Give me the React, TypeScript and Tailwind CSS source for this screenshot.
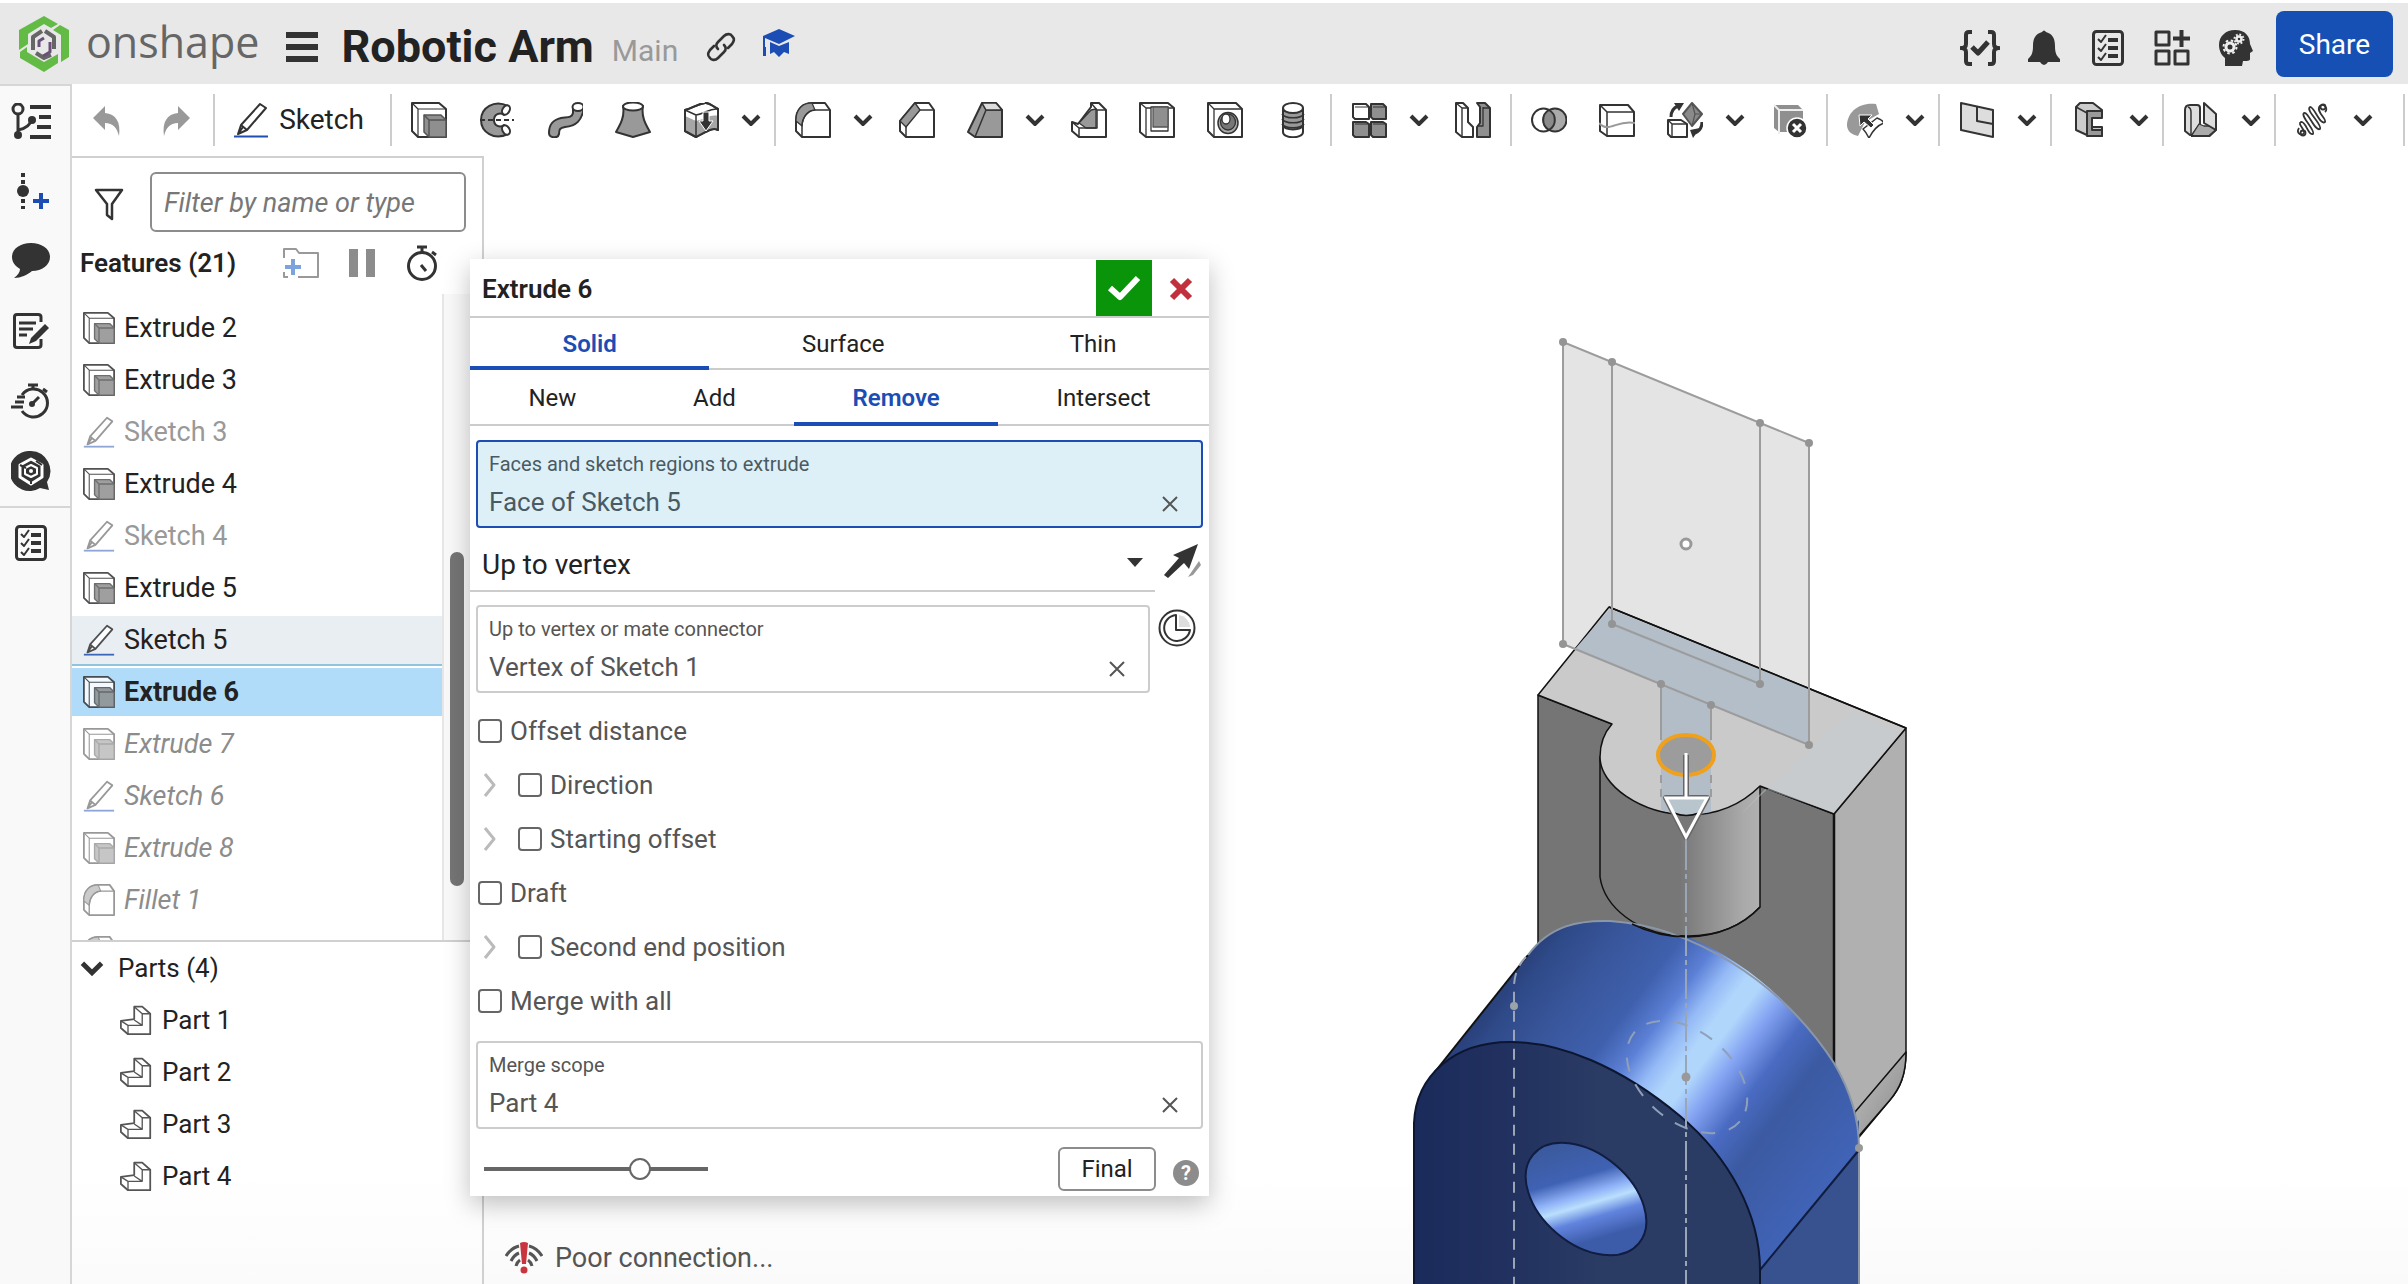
import type { ReactNode } from "react";
import clsx from "clsx";

type IconProps = { className?: string };

function Icon({
  children,
  className = "size-9",
  box = "0 0 36 36",
}: IconProps & { children: ReactNode; box?: string }) {
  return (
    <svg
      viewBox={box}
      className={clsx("shrink-0", className)}
      fill="none"
      stroke="#333"
      strokeWidth="2"
      strokeLinejoin="round"
      aria-hidden="true"
    >
      {children}
    </svg>
  );
}

/* ---------- toolbar icons ---------- */

const UndoIcon = () => (
  <Icon>
    <path d="M4 16L16 4V11C27 12 32 20 30 34C28 26 24 21 16 21V28Z" fill="#999" stroke="none" />
  </Icon>
);

const RedoIcon = () => (
  <Icon>
    <path d="M32 16L20 4V11C9 12 4 20 6 34C8 26 12 21 20 21V28Z" fill="#999" stroke="none" />
  </Icon>
);

const PencilIcon = ({ className }: IconProps) => (
  <Icon className={className}>
    <path d="M27 2L33 6L14 28L5 32L8 23ZM8 23L14 28M10 25L5 32" fill="#fff" />
    <path d="M1 34.500H35" stroke="#1f4fb0" />
  </Icon>
);

const ExtrudeIcon = ({ className }: IconProps) => (
  <Icon className={className}>
    <path d="M1 1H28L35 7V35H7L1 29Z" fill="#fff" />
    <path d="M1 1L7 7H35M7 7V35" strokeWidth="1.200" />
    <path d="M13 13H30L35 18V35H18L13 30Z" fill="#8f8f8f" stroke="#555" strokeWidth="1.500" />
    <path d="M13 13L18 18H35M18 18V35" stroke="#555" strokeWidth="1.500" />
  </Icon>
);

const RevolveIcon = () => (
  <Icon>
    <path
      d="M29 4C15-3 2 6 2 18C2 30 15 39 29 32C31 30 31 27 28 25L25 23C21 26 15 24 15 18C15 12 21 10 25 13L28 11C31 9 31 6 29 4Z"
      fill="#999"
    />
    <ellipse cx="27" cy="8" rx="3.500" ry="5" transform="rotate(30 27 8)" fill="#fff" />
    <ellipse cx="27" cy="28" rx="3.500" ry="5" transform="rotate(-30 27 28)" fill="#fff" />
    <path d="M1 18H35" strokeDasharray="5 3" />
  </Icon>
);

const SweepIcon = () => (
  <Icon>
    <path
      d="M26 5V11C25 16 20 15 14 16C6 18 2 22 2 31C2 36 11 37 12 32C12 27 13 26 18 25C29 24 35 19 37 5"
      fill="#999"
    />
    <ellipse cx="31" cy="5" rx="5.500" ry="4" fill="#fff" />
  </Icon>
);

const LoftIcon = () => (
  <Icon>
    <path d="M8 4C10 15 5 23 1 30L18 35L35 30C31 23 26 15 28 4Z" fill="#999" />
    <ellipse cx="18" cy="4.500" rx="10" ry="4" fill="#fff" />
  </Icon>
);

const ThickenIcon = () => (
  <Icon>
    <path d="M2 8C10 6 14 2 22 1C26 0 29 4 35 7V28C29 25 23 30 13 35L2 29Z" fill="#fff" />
    <path d="M2 14L13 19C22 17 28 12 35 14V28C29 25 23 30 13 35L2 29Z" fill="#a6a6a6" stroke="none" />
    <path d="M2 8C10 6 14 2 22 1C26 0 29 4 35 7V28C29 25 23 30 13 35L2 29Z" />
    <path d="M2 8L13 13C22 12 26 6 35 7M13 13V35" strokeWidth="1.500" />
    <path d="M20 10H26V19H30L23 29L16 19H20Z" fill="#333" stroke="#fff" strokeWidth="1" />
  </Icon>
);

const FilletIcon = ({ className }: IconProps) => (
  <Icon className={className}>
    <path d="M1 18C1 7 8 1 17 1H30L35 8V35H7L1 29Z" fill="#fff" />
    <path d="M1 18C1 7 8 1 17 1L20 8C13 8 8 14 7 24L1 19Z" fill="#999" strokeWidth="1.200" />
    <path d="M35 8H20C12 9 7 16 7 24V35" strokeWidth="1.500" />
  </Icon>
);

const ChamferIcon = () => (
  <Icon>
    <path d="M1 19L16 1H30L35 8V35H7L1 29Z" fill="#fff" />
    <path d="M1 19L16 1L21 8L7 25Z" fill="#999" strokeWidth="1.300" />
    <path d="M35 8H21M7 25V35" strokeWidth="1.500" />
  </Icon>
);

const DraftIcon = () => (
  <Icon>
    <path d="M15 1H29L35 8V35H8L1 30Z" fill="#999" />
    <path d="M15 1L19 8H35M19 8L8 35" strokeWidth="1.500" />
    <path d="M15 1H29L35 8H19Z" fill="#ddd" strokeWidth="1.500" />
  </Icon>
);

const RibIcon = () => (
  <Icon>
    <path d="M1 20L7 22L20 5V1H28L35 8V35H8L1 29Z" fill="#fff" />
    <path d="M8 21L20 8L25 7V26H15Z" fill="#999" strokeWidth="1.300" />
    <path d="M20 1L26 8H35M26 8V26H8V35M1 20L8 26" strokeWidth="1.500" />
  </Icon>
);

const ShellIcon = () => (
  <Icon>
    <path d="M1 1H29L35 6V35H7L1 30Z" fill="#fff" />
    <path d="M1 1L7 6H35M7 6V35" strokeWidth="1.300" />
    <path d="M12 5H29V29H12Z" fill="#fff" strokeWidth="1.300" />
    <path d="M14 5H29V25H14Z" fill="#8f8f8f" stroke="#555" strokeWidth="1.300" />
  </Icon>
);

const HoleIcon = () => (
  <Icon>
    <path d="M1 1H29L35 7V35H7L1 29Z" fill="#fff" />
    <path d="M1 1L7 7H35M7 7V35" strokeWidth="1.300" />
    <ellipse cx="21" cy="21" rx="10" ry="10.500" fill="#aaa" strokeWidth="1.500" />
    <ellipse cx="21" cy="20" rx="7.500" ry="8" fill="#777" strokeWidth="1.300" />
    <ellipse cx="19" cy="17" rx="4" ry="5" fill="#fff" strokeWidth="1.300" />
  </Icon>
);

const ThreadIcon = () => (
  <Icon>
    <path d="M8 6V30C8 37 28 37 28 30V6" fill="#fff" />
    <path d="M8 9V23C10 29 26 29 28 23V9Z" fill="#999" />
    <path d="M7 12C10 17 26 17 29 12M7 17C10 22 26 22 29 17M7 22C10 27 26 27 29 22" strokeWidth="1.600" />
    <ellipse cx="18" cy="6" rx="10" ry="5" fill="#fff" />
  </Icon>
);

const PatternIcon = () => (
  <Icon>
    <path d="M2 2H15L18 5V17H4L2 15Z" fill="#fff" />
    <path d="M20 2H32L35 5V17H22L20 15Z" fill="#8f8f8f" />
    <path d="M2 20H15L18 22V35H4L2 33Z" fill="#8f8f8f" />
    <path d="M20 20H32L35 22V35H22L20 33Z" fill="#8f8f8f" />
    <path d="M4 5H18M22 5H35M4 22H18M22 22H35" strokeWidth="1" />
  </Icon>
);

const MirrorIcon = () => (
  <Icon>
    <path d="M1 1H8L13 6V20L18 25V35H7L1 30Z" fill="#fff" />
    <path d="M1 1L7 6H13M7 6V35" strokeWidth="1.400" />
    <path d="M22 1H30L35 6V35H22V25L25 21V5Z" fill="#8f8f8f" />
    <path d="M28 5V24H22M35 6H28" strokeWidth="1.300" />
  </Icon>
);

const BooleanIcon = () => (
  <Icon>
    <circle cx="12.500" cy="18" r="11.500" fill="#fff" />
    <circle cx="24" cy="18" r="11.500" fill="#aaa" />
    <path d="M18 8A11.500 11.500 0 0 1 18 28A11.500 11.500 0 0 1 18 8Z" fill="#8a8a8a" />
  </Icon>
);

const SplitIcon = () => (
  <Icon>
    <path d="M1 3H29L35 10V34H8L1 29Z" fill="#fff" />
    <path d="M1 3L8 10H35M8 10V34" strokeWidth="1.500" />
    <path d="M0 21C10 32 18 17 36 21" stroke="#999" />
  </Icon>
);

const TransformIcon = () => (
  <Icon>
    <path d="M25 1L35 12L25 24L16 12Z" fill="#8a8a8a" stroke="#555" />
    <path d="M25 1L28 12L25 24M28 12H35" stroke="#555" strokeWidth="1.200" />
    <path d="M1 18H14L20 22V35H4L1 32Z" fill="#fff" />
    <path d="M1 18L5 22H20M5 22V35" strokeWidth="1.400" />
    <path d="M4 15C4 10 6 6 11 4" strokeWidth="3" />
    <path d="M7 1L17 1L12 9ZM33 26L23 28L26 36Z" fill="#333" stroke="none" />
    <path d="M35 20C35 26 33 29 28 31" strokeWidth="3" />
  </Icon>
);

const DeleteFaceIcon = () => (
  <Icon>
    <path d="M3 3H27L32 8V30H8L3 26Z" fill="#8f8f8f" stroke="none" />
    <path d="M3 3L8 8H32M8 8V32" stroke="#eee" />
    <circle cx="26" cy="26" r="10" fill="#333" stroke="#fff" strokeWidth="1.500" />
    <path d="M22 22L30 30M30 22L22 30" stroke="#fff" strokeWidth="3" />
  </Icon>
);

const MoveFaceIcon = () => (
  <Icon>
    <path d="M0 24C0 10 12 0 29 2L32 12L18 20L11 34C4 32 1 30 0 24Z" fill="#999" stroke="none" />
    <path d="M16 27L30 16C33 17 36 19 37 21C31 23 26 28 22 36C20 32 18 29 16 27Z" fill="#fff" strokeWidth="1.500" />
    <path d="M12 13L25 13L21 17L27 23L24 26L17 20L13 24Z" fill="#333" stroke="#fff" strokeWidth="1" />
  </Icon>
);

const PlaneIcon = () => (
  <Icon>
    <path d="M2 1L34 8V35L2 28Z" fill="#ddd" />
    <path d="M18 5V19L34 22" />
  </Icon>
);

const FrameIcon = () => (
  <Icon>
    <path d="M5 5L9 1H22L31 8V15H26L20 14V25H31V34H18L5 28Z" fill="#ccc" />
    <path d="M5 5L16 11H31M16 11L18 34M5 5V28" strokeWidth="1.500" />
    <path d="M31 9H16V34H31V28H21V16H31Z" fill="#999" />
  </Icon>
);

const SheetMetalIcon = () => (
  <Icon>
    <path d="M2 8Q2 3 7 3H14Q17 3 17 6V22L9 33H7L2 29Z" fill="#ddd" />
    <path d="M9 33L16 22L21 24H27L33 28L27 34H9Z" fill="#aaa" strokeWidth="1.300" />
    <path d="M21 1L33 12V28L21 21Z" fill="#ddd" />
    <path d="M5 5Q8 6 8 10V33" strokeWidth="1.500" />
    <path d="M8 34H26L33 28" />
  </Icon>
);

const WeldIcon = () => (
  <Icon>
    <path
      d="M4 26C0 32 8 34 9 31C10 27 2 22 6 20C11 19 13 34 18 32C21 29 5 14 9 11C13 9 20 30 25 27C28 23 10 8 15 5C19 4 25 24 30 20C32 17 20 9 25 4C28 1 34 6 30 10"
      strokeWidth="1.800"
    />
    <circle cx="8" cy="31" r="2.500" strokeWidth="1.800" />
    <circle cx="28" cy="5" r="2.500" strokeWidth="1.800" />
  </Icon>
);

const PartIcon = () => (
  <Icon className="size-8">
    <path d="M1 19L16 17V3H25L34 11V34H9L1 27Z" fill="#fff" stroke="#555" />
    <path d="M16 3L25 11H34M25 11V24L16 18M25 24H9L1 19M9 24V34" stroke="#555" strokeWidth="1.500" />
  </Icon>
);

const Chevron = ({ className = "h-3 w-5" }: IconProps) => (
  <Icon box="0 0 20 12" className={className}>
    <path d="M2 2L10 10L18 2" strokeWidth="4" strokeLinejoin="miter" />
  </Icon>
);

/* ---------- header and rail icons ---------- */

const Logo = () => (
  <Icon box="0 0 50 56" className="h-14 w-[50px]">
    <g fill="#63bb46" stroke="none">
      <path d="M25 0L39 8L32 12L25 8L9 18V28L0 34V14Z" />
      <path d="M41 9L50 14V41L42 46V19L34 14Z" />
      <path d="M8 31V36L25 46L39 38V47L25 56L1 42V36Z" />
    </g>
    <path d="M14 34V21L23 15M26 15L35 21V33M32 39L25 42L17 37" stroke="#666" strokeWidth="4" />
    <path d="M20 31V25L25 22M24 40L31 36V26" stroke="#6b4f78" strokeWidth="3" />
  </Icon>
);

const LinkIcon = () => (
  <Icon box="0 0 30 30" className="size-[30px]">
    <g strokeWidth="2.600" strokeLinecap="round">
      <path d="M12 17C9 14 10 12 12 10L18 4C21 1 25 2 26 4C29 7 28 9 26 12L22 16" />
      <path d="M18 13C21 16 20 18 18 20L12 26C9 29 5 28 4 26C1 23 2 21 4 18L8 14" />
    </g>
  </Icon>
);

const GraduateIcon = () => (
  <Icon box="0 0 32 28" className="h-7 w-8">
    <g fill="#1b4db5" stroke="none">
      <path d="M16 0L32 7L16 15L2 9V20H0V7Z" />
      <path d="M7 13L16 17L26 13V25L21 23L16 28L11 23L7 25Z" />
      <path d="M0 18H3V27H0Z" />
    </g>
  </Icon>
);

const BracesCheckIcon = () => (
  <Icon box="0 0 40 36" className="h-9 w-10">
    <path d="M12 2H9Q6 2 6 5V14Q6 18 1 18Q6 18 6 22V31Q6 34 9 34H12M28 2H31Q34 2 34 5V14Q34 18 39 18Q34 18 34 22V31Q34 34 31 34H28" strokeWidth="4" />
    <path d="M12 17L18 23L28 12" strokeWidth="5" />
  </Icon>
);

const BellIcon = () => (
  <Icon box="0 0 32 36" className="h-9 w-8">
    <path d="M14 2Q16-1 18 2C25 4 27 9 27 16C27 24 29 26 32 29V32H20Q16 38 12 32H0V29C3 26 5 24 5 16C5 9 7 4 14 2Z" fill="#333" stroke="none" />
  </Icon>
);

const ChecklistIcon = () => (
  <Icon box="0 0 32 36" className="h-9 w-8">
    <rect x="1.500" y="1.500" width="29" height="33" rx="3" strokeWidth="3" />
    <path d="M6 9L9 12L14 5M6 18L9 21L14 14M6 27L9 30L14 23" />
    <path d="M16 10H26M16 18H26M16 26H26" strokeWidth="4" />
  </Icon>
);

const AppsIcon = () => (
  <Icon>
    <path d="M2 2H15V15H2ZM2 21H15V34H2ZM21 21H34V34H21Z" strokeWidth="3" />
    <path d="M27.500 0V17M19 8.500H36" strokeWidth="4" />
  </Icon>
);

const HeadGearsIcon = () => (
  <Icon box="0 0 34 36" className="h-9 w-[34px]">
    <path d="M16 0C27 0 31 7 31 14L34 21L31 23V29C31 31 28 31 24 31L23 36H6V28C2 25 0 20 0 15C0 6 7 0 16 0Z" fill="#333" stroke="none" />
    <circle cx="11" cy="17" r="4" stroke="#eee" strokeWidth="3" />
    <circle cx="11" cy="17" r="6.500" stroke="#eee" strokeWidth="2" strokeDasharray="2.500 2.600" />
    <circle cx="20" cy="9" r="2.500" stroke="#eee" strokeWidth="2.500" />
    <circle cx="20" cy="9" r="4.500" stroke="#eee" strokeWidth="2" strokeDasharray="1.800 1.700" />
  </Icon>
);

const VersionsIcon = () => (
  <Icon box="0 0 40 36" className="h-9 w-10">
    <circle cx="7" cy="6" r="5" strokeWidth="3" />
    <path d="M7 11V31M7 27C12 26 19 24 20 17" strokeWidth="3" />
    <circle cx="7" cy="32" r="4" fill="#333" stroke="none" />
    <circle cx="21" cy="17" r="4" fill="#333" stroke="none" />
    <path d="M19 4H40M28 14H40M26 24H40M19 34H40" strokeWidth="4" />
  </Icon>
);

const InsertIcon = () => (
  <Icon box="0 0 40 36" className="h-9 w-10">
    <path d="M12 0V4M12 7V11M12 26V30M12 33V36" strokeWidth="4" />
    <circle cx="12" cy="18" r="6" fill="#333" stroke="none" />
    <path d="M30 20V36M22 28H38" stroke="#1b4db5" strokeWidth="4" />
  </Icon>
);

const CommentIcon = () => (
  <Icon box="0 0 40 36" className="h-9 w-10">
    <path d="M20 0C31 0 39 6 39 14C39 22 31 28 21 28C16 32 10 35 3 35C7 32 9 29 9 26C4 23 1 19 1 14C1 6 9 0 20 0Z" fill="#333" stroke="none" />
  </Icon>
);

const NoteIcon = () => (
  <Icon box="0 0 40 36" className="h-9 w-10">
    <path d="M30 9V4Q30 1.500 27 1.500H6Q3.500 1.500 3.500 4V32Q3.500 34.500 6 34.500H27Q30 34.500 30 32V26" strokeWidth="3" />
    <path d="M8 10H25M8 16H22M8 22H16" strokeWidth="3" />
    <path d="M34 11L38 15L25 28L18 31L20 25Z" fill="#333" stroke="none" />
  </Icon>
);

const RailTimerIcon = () => (
  <Icon box="0 0 40 36" className="h-9 w-10">
    <path d="M11 12A14 14 0 1 1 11 28" strokeWidth="3" />
    <path d="M17 2H27M22 2V7M32 6L36 9M0 24H12M4 19H13M6 14H14" strokeWidth="3" />
    <path d="M21 21L28 14" strokeWidth="3" />
    <circle cx="21" cy="21" r="3" fill="#333" stroke="none" />
  </Icon>
);

const SearchHexIcon = () => (
  <Icon box="0 0 40 40" className="size-10">
    <path d="M20 0A20 20 0 0 1 36 31L38 39L29 37A20 20 0 1 1 20 0Z" fill="#333" stroke="none" />
    <path d="M20 8L31 14V26L20 33L9 26V14Z" stroke="#fff" strokeWidth="3" />
    <path d="M20 14L26 17V23L20 26L14 23V17Z" stroke="#fff" strokeWidth="2" />
    <circle cx="20" cy="20" r="2" fill="#fff" stroke="none" />
    <path d="M9 14L15 17M31 14L25 10M20 33V27" strokeWidth="2" />
  </Icon>
);

const StopwatchIcon = () => (
  <Icon box="0 0 34 36" className="h-9 w-[34px]">
    <circle cx="17" cy="21" r="13.500" strokeWidth="3" />
    <path d="M12 2H22M17 2V7M27 7L31 10" strokeWidth="3" />
    <path d="M16 20L21 26" strokeWidth="3" />
  </Icon>
);

const PoorConnectionIcon = () => (
  <Icon box="0 0 38 32" className="h-8 w-[38px]">
    <path d="M1 14Q6 6 14 4M6 19Q9 13 14 11M11 24Q12 20 15 18M37 14Q32 6 24 4M32 19Q29 13 24 11M27 24Q26 20 23 18" stroke="#555" strokeWidth="3" />
    <path d="M15 1Q19-1 23 1L21 22H17Z" fill="#c9353f" stroke="none" />
    <circle cx="19" cy="28" r="3.500" fill="#c9353f" stroke="none" />
  </Icon>
);

/* ---------- header ---------- */

const headerActions = [
  { name: "Custom features", icon: <BracesCheckIcon /> },
  { name: "Notifications", icon: <BellIcon /> },
  { name: "Tasks", icon: <ChecklistIcon /> },
  { name: "App store", icon: <AppsIcon /> },
  { name: "Learning", icon: <HeadGearsIcon /> },
];

function Header() {
  return (
    <header className="flex h-[84px] shrink-0 items-center justify-between border-t-[3px] border-white bg-[#e8e8e8] pr-[15px] pl-[19px]">
      <div className="flex items-center">
        <a href="#home" className="flex items-center gap-[17px]">
          <Logo />
          <span className="mb-1 font-['Open_Sans',sans-serif] text-[43px] leading-none text-[#666]">
            onshape
          </span>
        </a>
        <div className="mt-1.5 flex items-center">
          <button aria-label="Menu" className="ml-[27px] flex w-8 flex-col gap-1.5">
            <span className="h-1.5 bg-[#333]" />
            <span className="h-1.5 bg-[#333]" />
            <span className="h-1.5 bg-[#333]" />
          </button>
          <h1 className="ml-[23px] text-[45px] leading-none font-bold">Robotic Arm</h1>
          <span className="mt-2 ml-[18px] text-[30px] leading-none text-[#999]">Main</span>
          <button aria-label="Copy link" className="ml-7">
            <LinkIcon />
          </button>
          <button aria-label="Learning center" className="mb-2 ml-[27px]">
            <GraduateIcon />
          </button>
        </div>
      </div>
      <div className="flex items-center">
        <div className="mt-2 mr-2 flex items-center">
          {headerActions.map((action) => (
            <button key={action.name} aria-label={action.name} className="flex w-16 justify-center">
              {action.icon}
            </button>
          ))}
        </div>
        <button className="h-[66px] w-[117px] rounded-lg bg-[#1650b5] pt-0.5 text-[28px] text-white">
          Share
        </button>
      </div>
    </header>
  );
}

/* ---------- left rail ---------- */

const railItems = [
  { name: "Versions", icon: <VersionsIcon /> },
  { name: "Insert", icon: <InsertIcon /> },
  { name: "Comments", icon: <CommentIcon /> },
  { name: "Notes", icon: <NoteIcon /> },
  { name: "Performance", icon: <RailTimerIcon /> },
  { name: "Search", icon: <SearchHexIcon /> },
];

function Rail() {
  return (
    <nav className="flex w-[72px] shrink-0 flex-col border-t-2 border-r-2 border-[#d6d6d6] bg-[#f9f9f9]">
      {railItems.map((item) => (
        <button key={item.name} aria-label={item.name} className="flex h-[70px] items-center pl-[11px]">
          {item.icon}
        </button>
      ))}
      <button aria-label="Tasks" className="flex h-[72px] items-center border-t-2 border-[#d6d6d6] pl-[15px]">
        <ChecklistIcon />
      </button>
    </nav>
  );
}

/* ---------- toolbar ---------- */

type Tool = { name: string; icon: ReactNode; menu?: boolean };

const toolGroups: Tool[][] = [
  [
    { name: "Extrude", icon: <ExtrudeIcon /> },
    { name: "Revolve", icon: <RevolveIcon /> },
    { name: "Sweep", icon: <SweepIcon /> },
    { name: "Loft", icon: <LoftIcon /> },
    { name: "Thicken", icon: <ThickenIcon />, menu: true },
  ],
  [
    { name: "Fillet", icon: <FilletIcon />, menu: true },
    { name: "Chamfer", icon: <ChamferIcon /> },
    { name: "Draft", icon: <DraftIcon />, menu: true },
    { name: "Rib", icon: <RibIcon /> },
    { name: "Shell", icon: <ShellIcon /> },
    { name: "Hole", icon: <HoleIcon /> },
    { name: "Thread", icon: <ThreadIcon /> },
  ],
  [
    { name: "Pattern", icon: <PatternIcon />, menu: true },
    { name: "Mirror", icon: <MirrorIcon /> },
  ],
  [
    { name: "Boolean", icon: <BooleanIcon /> },
    { name: "Split", icon: <SplitIcon /> },
    { name: "Transform", icon: <TransformIcon />, menu: true },
    { name: "Delete face", icon: <DeleteFaceIcon /> },
  ],
  [{ name: "Move face", icon: <MoveFaceIcon />, menu: true }],
  [{ name: "Plane", icon: <PlaneIcon />, menu: true }],
  [{ name: "Frame", icon: <FrameIcon />, menu: true }],
  [{ name: "Sheet metal", icon: <SheetMetalIcon />, menu: true }],
  [{ name: "Weld", icon: <WeldIcon />, menu: true }],
];

const Separator = () => <div className="mx-[3px] h-[52px] w-0.5 shrink-0 bg-[#ccc]" />;

function Toolbar() {
  return (
    <div className="flex h-[72px] shrink-0 items-center overflow-hidden">
      <button aria-label="Undo" className="flex w-[69px] shrink-0 justify-center">
        <UndoIcon />
      </button>
      <button aria-label="Redo" className="flex w-[69px] shrink-0 justify-center">
        <RedoIcon />
      </button>
      <Separator />
      <button className="flex w-[169px] shrink-0 items-center justify-center gap-2.5 pr-2 text-[28px]">
        <PencilIcon className="size-9" />
        Sketch
      </button>
      {toolGroups.map((group) => (
        <div key={group[0].name} className="flex shrink-0 items-center">
          <Separator />
          {group.map((tool) => (
            <div key={tool.name} className="flex">
              <button aria-label={tool.name} className="flex w-[68px] justify-center">
                {tool.icon}
              </button>
              {tool.menu && (
                <button aria-label={`${tool.name} menu`} className="mr-1 flex w-8 items-center justify-center">
                  <Chevron />
                </button>
              )}
            </div>
          ))}
        </div>
      ))}
      <div className="ml-auto">
        <Separator />
      </div>
    </div>
  );
}

/* ---------- feature list ---------- */

type Feature = {
  name: string;
  kind: "extrude" | "sketch" | "fillet";
  state?: "hidden" | "rolled" | "hover" | "selected";
};

const features: Feature[] = [
  { name: "Extrude 2", kind: "extrude" },
  { name: "Extrude 3", kind: "extrude" },
  { name: "Sketch 3", kind: "sketch", state: "hidden" },
  { name: "Extrude 4", kind: "extrude" },
  { name: "Sketch 4", kind: "sketch", state: "hidden" },
  { name: "Extrude 5", kind: "extrude" },
  { name: "Sketch 5", kind: "sketch", state: "hover" },
  { name: "Extrude 6", kind: "extrude", state: "selected" },
  { name: "Extrude 7", kind: "extrude", state: "rolled" },
  { name: "Sketch 6", kind: "sketch", state: "rolled" },
  { name: "Extrude 8", kind: "extrude", state: "rolled" },
  { name: "Fillet 1", kind: "fillet", state: "rolled" },
  { name: "", kind: "fillet", state: "rolled" },
];

const featureIcons = {
  extrude: ExtrudeIcon,
  sketch: PencilIcon,
  fillet: FilletIcon,
};

function FeatureRow({ feature }: { feature: Feature }) {
  const FeatureIcon = featureIcons[feature.kind];
  const { state } = feature;
  return (
    <li
      className={clsx(
        "flex h-[52px] shrink-0 items-center gap-[9px] border-y-2 border-transparent bg-clip-padding pl-[11px] text-[27px]",
        state === "hidden" && "text-[#999]",
        state === "rolled" && "text-[#8c8c8c] italic",
        state === "hover" && "border-b-[#8fc3de] bg-[#e9eef3]",
        state === "selected" && "bg-[#b0dcf9] font-bold"
      )}
    >
      <FeatureIcon
        className={clsx("size-8", state === "hidden" || state === "rolled" ? "opacity-50" : "opacity-85")}
      />
      {feature.name}
    </li>
  );
}

function FeaturePanel() {
  return (
    <aside className="flex w-[412px] shrink-0 flex-col border-t-2 border-r-2 border-[#d0d0d0] bg-linear-to-b from-white from-90% to-[#fbfbfb]">
      <div className="flex items-center gap-6 pt-3.5 pr-4 pl-5">
        <button aria-label="Filter" className="pt-1">
          <Icon box="0 0 34 36" className="h-9 w-[34px]">
            <path d="M4 4H30L20 18V33L15 29V18Z" strokeWidth="2.500" />
          </Icon>
        </button>
        <input
          aria-label="Filter by name or type"
          placeholder="Filter by name or type"
          className="h-[60px] w-full min-w-0 rounded-md border-2 border-[#8c8c8c] bg-white px-3 pt-0.5 text-[27px] italic placeholder:text-[#777]"
        />
      </div>
      <div className="flex h-[62px] items-center pl-2">
        <h2 className="flex-1 font-semibold">Features (21)</h2>
        <div className="mr-[43px] flex items-center gap-[30px]">
          <button aria-label="New folder">
            <Icon box="0 0 36 30" className="h-[30px] w-9">
              <path d="M1 10V1H13L16 5H35V29H15M1 24V29H5" stroke="#999" />
              <path d="M10 11V27M2 19H18" stroke="#7da3dd" strokeWidth="4" />
            </Icon>
          </button>
          <button aria-label="Pause" className="flex h-7 gap-2">
            <span className="w-[9px] bg-[#8c8c8c]" />
            <span className="w-[9px] bg-[#8c8c8c]" />
          </button>
          <button aria-label="Regeneration times">
            <StopwatchIcon />
          </button>
        </div>
      </div>
      <div className="flex h-[646px] shrink-0 overflow-hidden">
        <ul className="flex flex-1 flex-col pt-2">
          {features.map((feature, i) => (
            <FeatureRow key={i} feature={feature} />
          ))}
        </ul>
        <div className="w-10 border-l-2 border-[#e6e6e6] bg-[#f9f9f9] pt-[258px] pl-1.5">
          <div className="h-[334px] w-3.5 rounded-full bg-[#757575]" />
        </div>
      </div>
      <section className="border-t-2 border-[#d0d0d0]">
        <button className="flex h-[52px] items-center gap-3.5 pl-2">
          <Chevron className="h-4 w-6" />
          Parts (4)
        </button>
        <ul>
          {["Part 1", "Part 2", "Part 3", "Part 4"].map((part) => (
            <li key={part} className="flex h-[52px] items-center gap-2.5 pl-12">
              <PartIcon />
              {part}
            </li>
          ))}
        </ul>
      </section>
    </aside>
  );
}

/* ---------- extrude dialog ---------- */

function Tabs({ items, active }: { items: string[]; active: string }) {
  return (
    <div role="tablist" className="flex border-b-2 border-[#ccc]">
      {items.map((item) => (
        <button
          key={item}
          role="tab"
          aria-selected={item === active}
          className={clsx(
            "-mb-0.5 flex-auto border-b-4 pt-1 text-2xl",
            item === active ? "border-[#1b4db5] font-semibold text-[#1b4db5]" : "border-transparent"
          )}
        >
          {item}
        </button>
      ))}
    </div>
  );
}

function SelectionBox({
  label,
  value,
  active = false,
}: {
  label: string;
  value: string;
  active?: boolean;
}) {
  return (
    <div
      className={clsx(
        "flex h-[88px] flex-1 items-end justify-between rounded border-2 pr-[23px] pb-1.5 pl-[11px]",
        active ? "border-[#1b4db5] bg-[#ddf0f8] text-[#4a5a62]" : "border-[#ccc] bg-white text-[#555]"
      )}
    >
      <div>
        <div className="text-xl leading-7">{label}</div>
        <div className="mt-1.5 leading-9">{value}</div>
      </div>
      <button aria-label={`Clear ${value}`} className="mb-2">
        <Icon box="0 0 16 16" className="size-4">
          <path d="M1 1L15 15M15 1L1 15" stroke="#555" />
        </Icon>
      </button>
    </div>
  );
}

const options = [
  { name: "Offset distance" },
  { name: "Direction", nested: true },
  { name: "Starting offset", nested: true },
  { name: "Draft" },
  { name: "Second end position", nested: true },
  { name: "Merge with all" },
];

function ExtrudeDialog() {
  return (
    <section
      aria-label="Extrude 6"
      className="absolute top-[103px] -left-3.5 w-[739px] bg-white pb-0.5 shadow-[0_8px_24px_rgba(0,0,0,0.25)]"
    >
      <header className="flex h-[59px] items-center border-b-2 border-[#ccc]">
        <h2 className="flex-1 pt-1 pl-3 font-semibold">Extrude 6</h2>
        <button aria-label="Accept" className="flex h-14 w-14 items-center justify-center bg-[#0a940a]">
          <Icon box="0 0 34 26" className="h-[26px] w-[34px]">
            <path d="M3 13L13 22L31 3" stroke="#fff" strokeWidth="6" />
          </Icon>
        </button>
        <button aria-label="Cancel" className="flex w-[57px] justify-center pt-0.5">
          <Icon box="0 0 24 24" className="size-6">
            <path d="M3 3L21 21M21 3L3 21" stroke="#c1303c" strokeWidth="6" />
          </Icon>
        </button>
      </header>
      <div className="grid grid-rows-[52px_56px]">
        <Tabs items={["Solid", "Surface", "Thin"]} active="Solid" />
        <Tabs items={["New", "Add", "Remove", "Intersect"]} active="Remove" />
      </div>
      <div className="flex px-1.5 pt-3.5">
        <SelectionBox label="Faces and sketch regions to extrude" value="Face of Sketch 5" active />
      </div>
      <div className="flex items-center pt-2">
        <div className="relative flex-1 border-b-2 border-[#ccc]">
          <select aria-label="End type" className="h-[54px] w-full appearance-none bg-transparent pt-1 pl-3 text-[28px]">
            <option>Up to vertex</option>
          </select>
          <Icon box="0 0 16 9" className="pointer-events-none absolute top-[22px] right-3 h-[9px] w-4">
            <path d="M0 0H16L8 9Z" fill="#333" stroke="none" />
          </Icon>
        </div>
        <button aria-label="Flip direction" className="flex w-[54px] pb-1.5 pl-2">
          <Icon box="0 0 38 36" className="h-9 w-[38px]">
            <path d="M36 18L38 22L30 32L25 34Z" fill="#999" stroke="none" />
            <path d="M35 1L26 26L21 20L5 35L1 32L16 15L10 12Z" fill="#333" stroke="none" />
          </Icon>
        </button>
      </div>
      <div className="flex pt-[13px] pl-1.5">
        <SelectionBox label="Up to vertex or mate connector" value="Vertex of Sketch 1" />
        <button aria-label="Select mate connector" className="flex w-[59px] pt-1 pl-2">
          <Icon box="0 0 38 38" className="size-[38px]">
            <circle cx="19" cy="19" r="17.500" />
            <path d="M18 6A13 13 0 1 0 32 21H18Z" />
            <path d="M21 6A13 13 0 0 1 32 18H21Z" fill="#ddd" stroke="none" />
          </Icon>
        </button>
      </div>
      <div className="pt-[11px] pb-[5px] text-[#555]">
        {options.map((option) => (
          <div key={option.name} className="flex h-[54px] items-center pl-2">
            {option.nested && (
              <button aria-label={`Expand ${option.name}`} className="flex w-10 pl-[5px]">
                <Icon box="0 0 14 24" className="h-6 w-3.5">
                  <path d="M2 1L11 12L2 23" stroke="#bbb" strokeWidth="3" />
                </Icon>
              </button>
            )}
            <label className="flex items-center gap-2">
              <input
                type="checkbox"
                className="size-6 appearance-none rounded border-2 border-[#666] bg-white checked:bg-[#1b4db5]"
              />
              {option.name}
            </label>
          </div>
        ))}
      </div>
      <div className="flex px-1.5 pt-2">
        <SelectionBox label="Merge scope" value="Part 4" />
      </div>
      <footer className="flex h-[65px] items-center pt-3.5 pr-2.5 pl-3.5">
        <input
          type="range"
          aria-label="Regeneration detail"
          defaultValue={72}
          className="h-6 w-[224px] appearance-none bg-transparent bg-[linear-gradient(#666,#666)] bg-[length:100%_4px] bg-center bg-no-repeat [&::-webkit-slider-thumb]:size-[22px] [&::-webkit-slider-thumb]:appearance-none [&::-webkit-slider-thumb]:rounded-full [&::-webkit-slider-thumb]:border-2 [&::-webkit-slider-thumb]:border-[#666] [&::-webkit-slider-thumb]:bg-white"
        />
        <button className="mr-[17px] ml-auto h-11 w-[98px] rounded-md border-2 border-[#8c8c8c] text-2xl">
          Final
        </button>
        <button
          aria-label="Help"
          className="mt-2 size-[26px] rounded-full bg-[#8c8c8c] text-xl leading-[26px] font-bold text-white"
        >
          ?
        </button>
      </footer>
    </section>
  );
}

/* ---------- model view ---------- */

const sketchPoints = [
  [1563, 342], [1612, 362], [1760, 423], [1809, 443],
  [1563, 644], [1612, 624], [1760, 684], [1809, 745],
  [1661, 684], [1711, 705],
];

function Model() {
  return (
    <svg
      viewBox="484 156 1924 1128"
      preserveAspectRatio="xMidYMid slice"
      className="absolute inset-0 size-full"
      fill="none"
      role="img"
      aria-label="Robotic arm model"
    >
      <defs>
        <linearGradient id="barrel" gradientUnits="userSpaceOnUse" x1="1480" y1="980" x2="1800" y2="1220">
          <stop offset="0" stopColor="#22356b" />
          <stop offset="0.100" stopColor="#2f4a88" />
          <stop offset="0.200" stopColor="#38559a" />
          <stop offset="0.340" stopColor="#3f60ad" />
          <stop offset="0.420" stopColor="#5c80d6" />
          <stop offset="0.480" stopColor="#94b9f6" />
          <stop offset="0.530" stopColor="#b0d6fc" />
          <stop offset="0.570" stopColor="#b0d6fc" />
          <stop offset="0.630" stopColor="#84a3f2" />
          <stop offset="0.710" stopColor="#4a6bc2" />
          <stop offset="0.800" stopColor="#3b5aa2" />
          <stop offset="1" stopColor="#4163b6" />
        </linearGradient>
        <linearGradient id="bore" gradientUnits="userSpaceOnUse" x1="1540" y1="1165" x2="1640" y2="1232">
          <stop offset="0" stopColor="#3b5a9f" />
          <stop offset="0.280" stopColor="#4062b4" />
          <stop offset="0.430" stopColor="#8fb1f7" />
          <stop offset="0.520" stopColor="#badffd" />
          <stop offset="0.640" stopColor="#6284de" />
          <stop offset="0.820" stopColor="#3c5caa" />
        </linearGradient>
        <linearGradient id="plate" gradientUnits="userSpaceOnUse" x1="1414" y1="0" x2="1600" y2="0">
          <stop offset="0" stopColor="#1a2b5b" />
          <stop offset="0.400" stopColor="#202f5e" />
          <stop offset="1" stopColor="#2a3b64" />
        </linearGradient>
        <linearGradient id="recess" gradientUnits="userSpaceOnUse" x1="1600" y1="0" x2="1760" y2="0">
          <stop offset="0" stopColor="#777" />
          <stop offset="0.500" stopColor="#777" />
          <stop offset="0.900" stopColor="#aaa" />
          <stop offset="1" stopColor="#b0b0b0" />
        </linearGradient>
        <linearGradient id="corner" x1="0" y1="0" x2="1" y2="1">
          <stop offset="0.300" stopColor="#b0b0b0" />
          <stop offset="0.700" stopColor="#999" />
        </linearGradient>
      </defs>

      {/* sketch plane above the block */}
      <path d="M1563 342L1809 443V745L1563 644Z" fill="#e4e4e4" />

      {/* grey block */}
      <g stroke="#111" strokeWidth="1.500" strokeLinejoin="round">
        <path d="M1834 814L1906 728V1052C1906 1075 1900 1088 1890 1100L1820 1184Z" fill="#b0b0b0" />
        <path d="M1906 1052L1855 1112L1852 1145L1858 1137L1890 1100C1900 1088 1906 1075 1906 1052Z" fill="url(#corner)" />
        <path
          d="M1538 695L1612 724L1760 786L1834 814V1100H1538Z"
          fill="#757575"
        />
        <path d="M1600 757V877C1604 905 1635 936 1688 936C1718 936 1742 926 1760 907V786L1690 740Z" fill="url(#recess)" />
        <path
          d="M1609 607L1906 728L1834 814L1760 786C1740 806 1715 815 1688 815C1640 814 1600 785 1600 757C1600 744 1604 733 1612 724L1538 695Z"
          fill="#cacaca"
        />
        <path d="M1834 814V1100" strokeWidth="2.500" />
      </g>
      <path d="M1740 815L1765 789L1833 812L1900 732L1850 712Z" fill="#c3ccd3" opacity="0.450" />
      <path d="M1610 609L1809 689V745L1575 649Z" fill="#b3bec9" />
      <path d="M1661 684L1711 705V812Q1686 818 1661 810Z" fill="#b3bdc7" />
      <path d="M1609 607L1906 728" stroke="#111" strokeWidth="1.500" />

      {/* blue clevis */}
      <path d="M1760 1240L1859 1120V1284H1760Z" fill="#38528f" />
      <path
        d="M1528 955C1550 925 1580 920 1610 921C1622 921 1628 922 1632 923C1650 933 1668 937 1688 937C1750 963 1800 1010 1834 1063C1850 1090 1859 1118 1859 1148L1760 1270L1600 1240L1434 1073Z"
        fill="url(#barrel)"
      />
      <path d="M1434 1073L1528 955" stroke="#111" strokeWidth="2" />
      <path
        d="M1528 955C1550 925 1580 920 1610 921C1690 926 1780 980 1834 1063C1850 1090 1859 1118 1859 1148V1284"
        stroke="#8b97a8"
        strokeWidth="2"
      />
      <path d="M1632 924C1650 933 1668 937 1688 937C1718 936 1742 926 1760 907" stroke="#111" strokeWidth="1.500" />
      <path d="M1859 1150L1760 1270" stroke="#101d40" strokeWidth="2" />
      <path
        d="M1414 1300V1123C1416 1075 1455 1042 1510 1042C1560 1042 1620 1066 1680 1116C1730 1158 1760 1215 1760 1270V1300Z"
        fill="url(#plate)"
        stroke="#0c1630"
        strokeWidth="2"
      />
      <ellipse
        cx="1586" cy="1199" rx="69" ry="45"
        transform="rotate(40 1586 1199)"
        fill="url(#bore)"
        stroke="#101d40"
        strokeWidth="2"
      />
      <ellipse
        cx="1687" cy="1077" rx="69" ry="45"
        transform="rotate(40 1687 1077)"
        stroke="#8fa0b8"
        strokeWidth="2"
        strokeDasharray="14 14"
      />

      {/* construction lines */}
      <path d="M1526 957Q1515 968 1514 985V1284" stroke="#9aa5b5" strokeWidth="2" strokeDasharray="11 8" />
      <path d="M1686 840V1284" stroke="#9aa5b5" strokeWidth="2" strokeDasharray="30 4 5 4" />
      <circle cx="1514" cy="1006" r="4" fill="#9aa3a8" />
      <circle cx="1686" cy="1077" r="4.500" fill="#999" />
      <circle cx="1859" cy="1148" r="4" fill="#999" />

      <g stroke="#9c9c9c" strokeWidth="2">
        <path d="M1563 644V342L1809 443V745Z" />
        <path d="M1612 362V624L1760 684V423" />
        <path d="M1661 684V740M1711 705V740" />
        <path d="M1661 775V800M1711 775V800" strokeDasharray="8 6" />
      </g>
      {sketchPoints.map(([x, y]) => (
        <circle key={`${x}-${y}`} cx={x} cy={y} r="4" fill="#949494" />
      ))}
      <circle cx="1686" cy="544" r="5" fill="#fff" stroke="#999" strokeWidth="3" />

      {/* selected circle and depth arrow */}
      <ellipse cx="1686" cy="755" rx="28" ry="20" fill="#9c9c9c" stroke="#efa01c" strokeWidth="4" />
      <g stroke="#666" strokeWidth="6" strokeLinejoin="round">
        <path d="M1686 755V796" />
        <path d="M1666 798H1707L1686 837Z" />
      </g>
      <path d="M1666 798H1707L1699 813Q1686 818 1674 813Z" fill="#b9c5cd" />
      <path d="M1674 813Q1686 818 1699 813L1686 837Z" fill="#777" />
      <path d="M1674 813Q1686 818 1699 813" stroke="#111" strokeWidth="1.500" />
      <g stroke="#fff" strokeWidth="3">
        <path d="M1686 753V797" />
        <path d="M1666 798H1707L1686 837Z" />
      </g>
    </svg>
  );
}

export default function App() {
  return (
    <div className="flex h-screen flex-col overflow-hidden bg-white font-[Roboto,sans-serif] text-[26px] text-[#222]">
      <Header />
      <div className="flex min-h-0 flex-1">
        <Rail />
        <div className="flex min-w-0 flex-1 flex-col">
          <Toolbar />
          <div className="flex min-h-0 flex-1">
            <FeaturePanel />
            <main className="relative min-w-0 flex-1 bg-linear-to-b from-white from-90% to-[#fafafa]">
              <Model />
              <ExtrudeDialog />
              <p className="absolute bottom-1.5 left-[21px] flex items-center gap-3 text-[27px] text-[#555]">
                <PoorConnectionIcon />
                Poor connection...
              </p>
            </main>
          </div>
        </div>
      </div>
    </div>
  );
}
